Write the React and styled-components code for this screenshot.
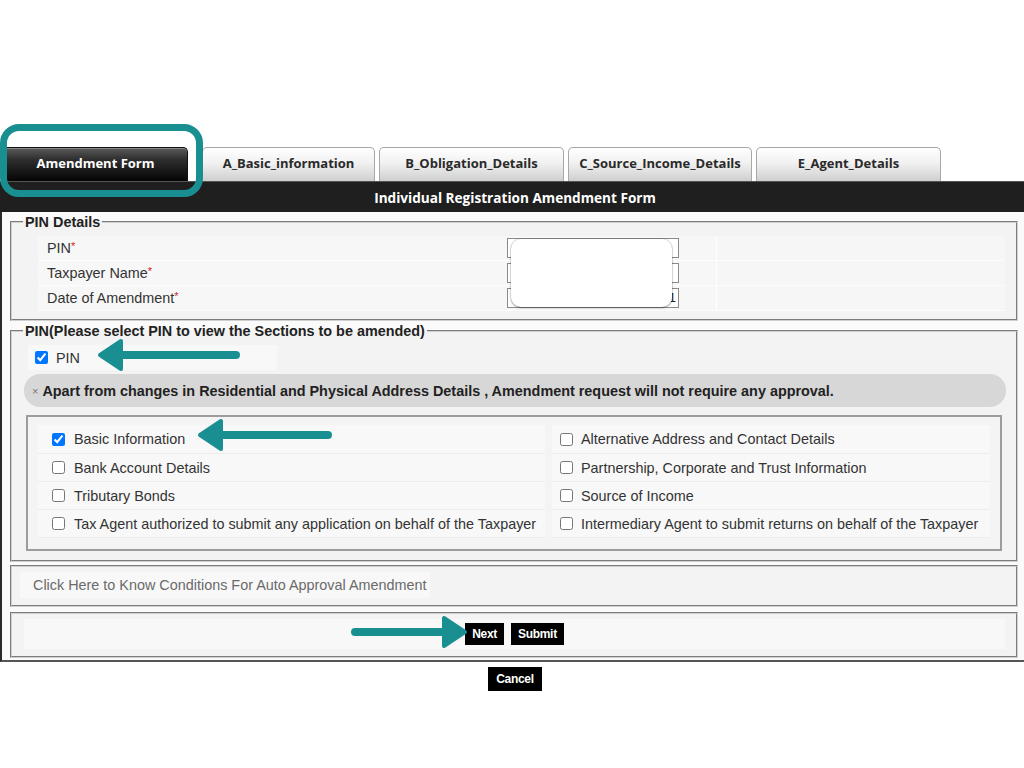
import React from "react";
import styled, { createGlobalStyle } from "styled-components";

const TEAL = "#1a8f92";

const tabs = [
  { label: "Amendment Form", width: 185, active: true },
  { label: "A_Basic_information", width: 173 },
  { label: "B_Obligation_Details", width: 185 },
  { label: "C_Source_Income_Details", width: 184 },
  { label: "E_Agent_Details", width: 185 },
];

const pinRows = [
  { label: "PIN", value: "" },
  { label: "Taxpayer Name", value: "" },
  { label: "Date of Amendment", value: "1" },
];

const sections = [
  ["Basic Information", true],
  ["Alternative Address and Contact Details", false],
  ["Bank Account Details", false],
  ["Partnership, Corporate and Trust Information", false],
  ["Tributary Bonds", false],
  ["Source of Income", false],
  ["Tax Agent authorized to submit any application on behalf of the Taxpayer", false],
  ["Intermediary Agent to submit returns on behalf of the Taxpayer", false],
];

function Arrow({ left, top, length, toRight }) {
  const h = 34;
  const mid = h / 2;
  const head = toRight
    ? `${length - 3},${mid} ${length - 24},${mid - 14} ${length - 24},${mid + 14}`
    : `3,${mid} 24,${mid - 14} 24,${mid + 14}`;
  const x1 = toRight ? 5 : 20;
  const x2 = toRight ? length - 20 : length - 5;
  return (
    <ArrowSvg $left={left} $top={top} width={length} height={h} viewBox={`0 0 ${length} ${h}`}>
      <line x1={x1} y1={mid} x2={x2} y2={mid} stroke={TEAL} strokeWidth="8" strokeLinecap="round" />
      <polygon points={head} fill={TEAL} stroke={TEAL} strokeWidth="4" strokeLinejoin="round" />
    </ArrowSvg>
  );
}

function App() {
  return (
    <Page>
      <GlobalStyle />
      <TabBar>
        {tabs.map((t) => (
          <Tab key={t.label} $active={t.active} $width={t.width}>
            {t.label}
          </Tab>
        ))}
      </TabBar>
      <TitleBar>Individual Registration Amendment Form</TitleBar>
      <Form>
        <Fieldset>
          <Legend>PIN Details</Legend>
          <PinBody>
            {pinRows.map((r) => (
              <PinRow key={r.label}>
                <LabelCell>
                  {r.label}
                  <Required>*</Required>
                </LabelCell>
                <InputCell>
                  <TextBox>{r.value}</TextBox>
                </InputCell>
                <EmptyCell />
              </PinRow>
            ))}
            <Redaction />
          </PinBody>
        </Fieldset>

        <Fieldset>
          <Legend>PIN(Please select PIN to view the Sections to be amended)</Legend>
          <SectionBody>
            <PinCheck>
              <Check type="checkbox" checked readOnly />
              PIN
            </PinCheck>
            <Notice>
              <Close>×</Close>
              Apart from changes in Residential and Physical Address Details , Amendment request will not require any approval.
            </Notice>
            <OptionsBox>
              {sections.map(([label, checked], i) => (
                <Option key={label} $right={i % 2 === 1}>
                  <Check type="checkbox" checked={checked} readOnly />
                  {label}
                </Option>
              ))}
            </OptionsBox>
          </SectionBody>
        </Fieldset>

        <Panel>
          <LinkCell>Click Here to Know Conditions For Auto Approval Amendment</LinkCell>
        </Panel>

        <Panel>
          <ButtonCell>
            <DarkButton>Next</DarkButton>
            <DarkButton>Submit</DarkButton>
          </ButtonCell>
        </Panel>
      </Form>
      <CancelRow>
        <DarkButton>Cancel</DarkButton>
      </CancelRow>

      <Highlight />
      <Arrow left={97} top={338} length={144} />
      <Arrow left={197} top={418} length={136} />
      <Arrow left={350} top={615} length={118} toRight />
    </Page>
  );
}

const GlobalStyle = createGlobalStyle`
  html, body {
    margin: 0;
    padding: 0;
    background: #ffffff;
    overflow-x: hidden;
  }
  body {
    font-family: "Liberation Sans", Arial, sans-serif;
    color: #333;
  }
`;

const Page = styled.div`
  position: relative;
  width: 1030px;
  padding-top: 147px;
  height: 768px;
  box-sizing: border-box;
`;

const TabBar = styled.div`
  display: flex;
  align-items: flex-end;
  gap: 4px;
  padding-left: 3px;
  height: 34px;
`;

const Tab = styled.div`
  width: ${(p) => p.$width}px;
  height: 34px;
  box-sizing: border-box;
  padding-bottom: 4px;
  margin-right: ${(p) => (p.$active ? 10 : 0)}px;
  display: flex;
  align-items: center;
  justify-content: center;
  font-family: "Open Sans", sans-serif;
  font-weight: 700;
  font-size: 13px;
  border-radius: 5px 5px 0 0;
  border: 1px solid ${(p) => (p.$active ? "#111" : "#a8a8a8")};
  border-bottom: none;
  color: ${(p) => (p.$active ? "#fff" : "#2a2a2a")};
  background: ${(p) =>
    p.$active
      ? "linear-gradient(#5a5a5a 0%, #2e2e2e 35%, #050505 100%)"
      : "linear-gradient(#ffffff 0%, #f1f1f1 45%, #cfcfcf 100%)"};
  box-shadow: ${(p) => (p.$active ? "inset 0 1px 0 #888" : "none")};
`;

const TitleBar = styled.div`
  height: 31px;
  background: #1f1f1f;
  border-top: 1px solid #555;
  color: #fff;
  font-family: "Open Sans", sans-serif;
  font-weight: 700;
  font-size: 13.6px;
  display: flex;
  align-items: center;
  justify-content: center;
  box-sizing: border-box;
`;

const Form = styled.div`
  background: #fafafa;
  border-left: 2px solid #2a2a2a;
  border-bottom: 2px solid #555;
  padding: 2px 12px 2px 8px;
  display: flex;
  flex-direction: column;
  gap: 2px;
`;

const Fieldset = styled.fieldset`
  margin: 0;
  padding: 0;
  border: 2px groove #d0d0d0;
  background: #f3f3f3;
  min-width: 0;
`;

const Legend = styled.legend`
  margin-left: 11px;
  padding: 0 2px;
  font-weight: 700;
  font-size: 14.4px;
  line-height: 16px;
  color: #222;
`;

const PinBody = styled.div`
  position: relative;
  padding: 6px 11px 8px 26px;
  display: flex;
  flex-direction: column;
`;

const PinRow = styled.div`
  display: grid;
  grid-template-columns: 460px 218px 1fr;
  height: 24px;
  border-bottom: 1px solid #fdfdfd;
`;

const LabelCell = styled.div`
  background: #f7f7f7;
  display: flex;
  align-items: center;
  padding-left: 9px;
  font-size: 14.4px;
  color: #333;
`;

const Required = styled.span`
  color: #d21b1b;
  font-size: 11px;
  align-self: flex-start;
  margin-top: 4px;
`;

const InputCell = styled.div`
  background: #f7f7f7;
  display: flex;
  align-items: center;
  padding-left: 9px;
`;

const EmptyCell = styled.div`
  background: #f6f6f6;
  border-left: 1px solid #fff;
`;

const TextBox = styled.div`
  width: 172px;
  height: 20px;
  box-sizing: border-box;
  border: 1px solid #8a8a8a;
  background: #fff;
  font-size: 13px;
  line-height: 18px;
  text-align: right;
  padding-right: 2px;
  color: #222;
`;

const Redaction = styled.div`
  position: absolute;
  left: 499px;
  top: 9px;
  width: 161px;
  height: 68px;
  background: #fff;
  border-radius: 10px;
  box-shadow: 0 0 0 1px rgba(0, 0, 0, 0.08), 0 1px 2px rgba(0, 0, 0, 0.35);
`;

const SectionBody = styled.div`
  padding: 6px 10px 9px 12px;
  display: flex;
  flex-direction: column;
`;

const PinCheck = styled.label`
  width: 242px;
  height: 25px;
  margin-left: 4px;
  background: #f8f8f8;
  display: flex;
  align-items: center;
  gap: 8px;
  padding-left: 7px;
  font-size: 14.4px;
  color: #333;
`;

const Check = styled.input`
  width: 13px;
  height: 13px;
  margin: 0;
  flex-shrink: 0;
`;

const Notice = styled.div`
  margin-top: 4px;
  height: 33px;
  border-radius: 16px;
  background: #d7d7d7;
  display: flex;
  align-items: center;
  padding-left: 8px;
  font-size: 14.4px;
  font-weight: 700;
  color: #222;
`;

const Close = styled.span`
  font-size: 11px;
  font-weight: 400;
  color: #777;
  margin-right: 4px;
`;

const OptionsBox = styled.div`
  margin: 8px 4px 0 2px;
  border: 2px solid #9c9c9c;
  background: #f4f4f4;
  padding: 8px 10px 11px 10px;
  display: grid;
  grid-template-columns: 507px 1fr;
  column-gap: 7px;
  grid-template-rows: 29px 28px 28px 28px;
`;

const Option = styled.label`
  display: flex;
  align-items: center;
  gap: ${(p) => (p.$right ? 8 : 9)}px;
  padding-left: ${(p) => (p.$right ? 8 : 14)}px;
  background: #f8f8f8;
  border-bottom: 1px solid #ececec;
  font-size: 14.4px;
  color: #333;
`;

const Panel = styled.div`
  border: 2px groove #d0d0d0;
  background: #f3f3f3;
  padding: 5px 11px 7px 8px;
  margin-top: 1px;
  & + & {
    margin-top: 3px;
  }
`;

const LinkCell = styled.div`
  width: 410px;
  height: 26px;
  background: #f8f8f8;
  display: flex;
  align-items: center;
  padding-left: 13px;
  box-sizing: border-box;
  font-size: 14.4px;
  color: #6a6a6a;
`;

const ButtonCell = styled.div`
  margin-left: 4px;
  height: 30px;
  background: #f8f8f8;
  display: flex;
  align-items: center;
  justify-content: center;
  gap: 7px;
`;

const DarkButton = styled.button`
  height: 22px;
  padding: 0 6px;
  border: 1px solid #000;
  background: #000;
  color: #fff;
  font-family: "Liberation Sans", Arial, sans-serif;
  font-weight: 700;
  font-size: 12px;
  letter-spacing: -0.3px;
  cursor: pointer;
`;

const CancelRow = styled.div`
  display: flex;
  justify-content: center;
  padding-top: 5px;
  & > button {
    height: 24px;
    padding: 0 7px;
  }
`;

const Highlight = styled.div`
  position: absolute;
  left: 0;
  top: 124px;
  width: 203px;
  height: 73px;
  box-sizing: border-box;
  border: 7px solid ${TEAL};
  border-radius: 19px;
  pointer-events: none;
`;

const ArrowSvg = styled.svg`
  position: absolute;
  left: ${(p) => p.$left}px;
  top: ${(p) => p.$top}px;
  pointer-events: none;
`;

export default App;
